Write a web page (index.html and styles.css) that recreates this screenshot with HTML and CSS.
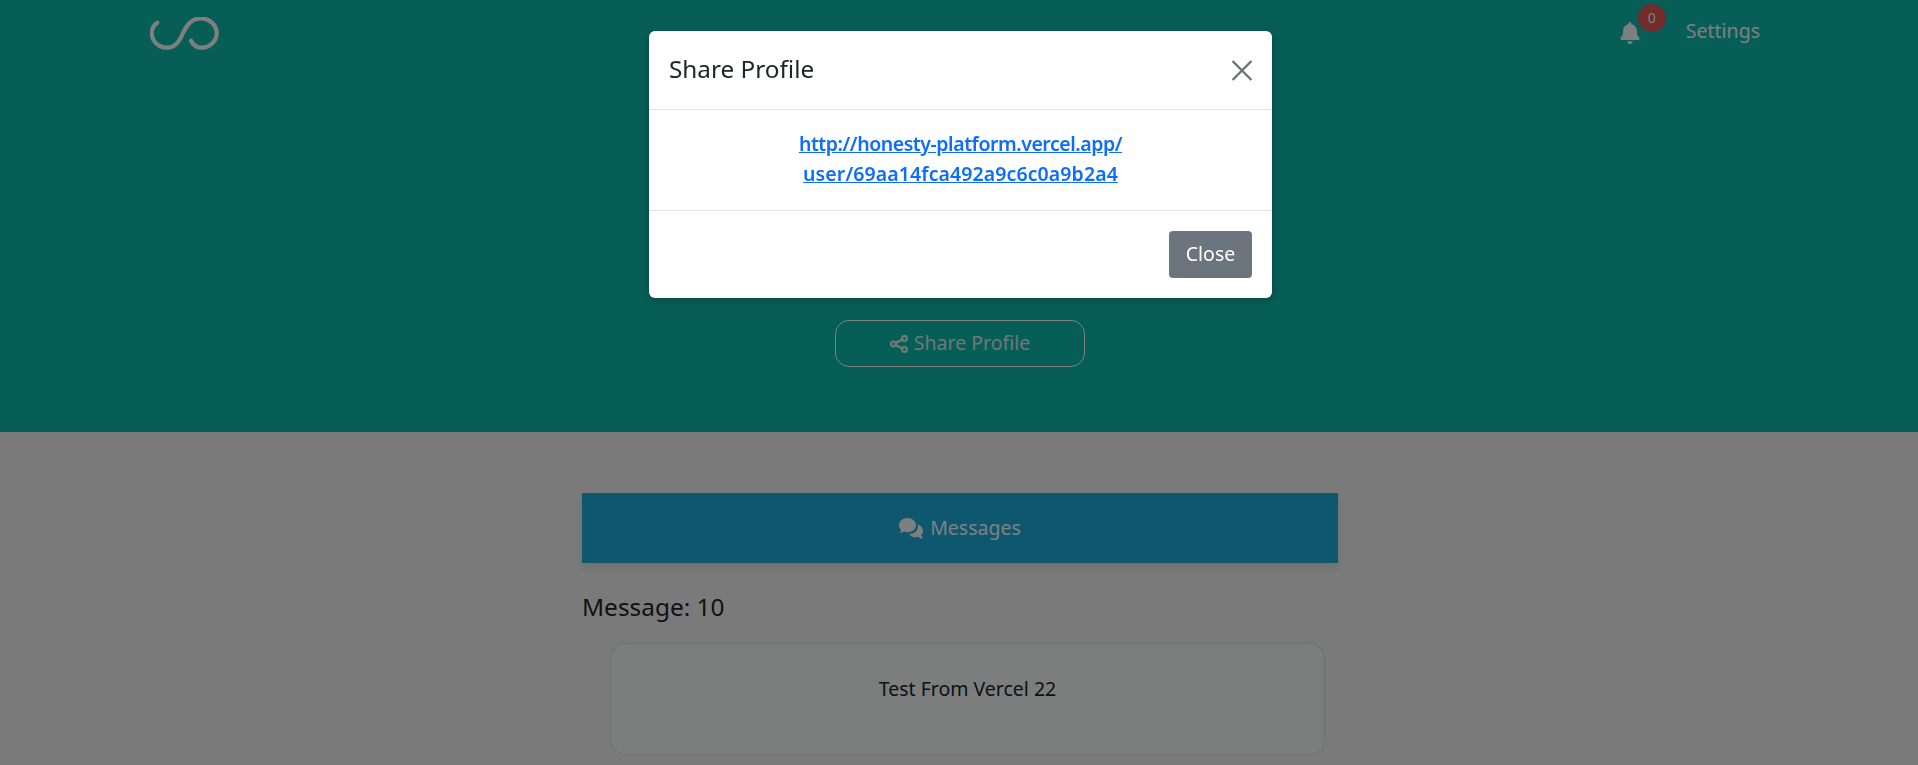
FILE: index.html
```html
<!DOCTYPE html>
<html lang="en">
<head>
<meta charset="utf-8">
<title>Share Profile</title>
<link rel="stylesheet" href="styles.css">
</head>
<body>
<div class="page">
  <header class="hero">
    <nav class="nav">
      <svg class="logo" viewBox="0 0 70 34" aria-hidden="true"><path d="M7.300 5.700C3.500 8.500 1.700 12 1.700 16c0 8 6.500 14.700 15 14.700 7.500 0 12-4.500 16.300-14.700C36.500 8 41.500 1.300 50.700 1.300c8.500 0 16 6.700 16 14.700 0 8.500-7 14.700-15 14.700-4.500 0-8-1.500-10.700-7"/></svg>
      <div class="nav-right">
        <span class="bell-wrap">
          <svg class="bell" viewBox="0 0 448 512" aria-hidden="true"><path d="M224 512c35.320 0 63.970-28.650 63.970-64H160.030c0 35.350 28.650 64 63.970 64zm215.390-149.710c-19.320-20.760-55.470-51.990-55.470-154.290 0-77.700-54.480-139.900-127.940-155.160V32c0-17.670-14.320-32-31.980-32s-31.980 14.330-31.980 32v20.840C118.560 68.100 64.080 130.300 64.080 208c0 102.300-36.150 133.530-55.470 154.290-6 6.450-8.660 14.160-8.610 21.710.11 16.400 12.980 32 32.100 32h383.800c19.120 0 32-15.600 32.100-32 .05-7.550-2.610-15.270-8.610-21.710z"/></svg>
          <span class="badge">0</span>
        </span>
        <a class="nav-link">Settings</a>
      </div>
    </nav>
    <button class="share-btn">
      <svg class="share-icon" viewBox="0 0 18 18" aria-hidden="true"><circle cx="14.500" cy="3.500" r="2.400"/><circle cx="3.500" cy="9" r="2.400"/><circle cx="14.500" cy="14.500" r="2.400"/><path d="M5.700 7.900 12.300 4.600M5.700 10.100l6.600 3.300"/></svg>
      <span>Share Profile</span>
    </button>
  </header>
  <main class="content">
    <div class="msg-bar">
      <svg class="msg-icon" viewBox="0 0 25 21" aria-hidden="true"><path d="M8.500 0C3.800 0 0 3.200 0 7.200c0 1.900.8 3.600 2.200 4.900C1.700 13.700.500 15 .500 15c2 0 3.500-.6 4.700-1.400 1 .4 2.100.6 3.300.6 4.700 0 8.500-3.200 8.500-7S13.200 0 8.500 0z"/><path d="M18.600 6.200c.3.700.4 1.400.4 2.200 0 4.400-3.800 7.500-8.800 7.500 1.100 2 3.300 3.300 6 3.300.9 0 1.800-.2 2.600-.5 1.100.9 2.800 1.800 5.200 1.800 0 0-1.200-1.300-1.900-3.200 1.200-1.200 1.900-2.700 1.900-4.300 0-3-2-5.600-5.400-6.800z"/></svg>
      <span>Messages</span>
    </div>
    <h2 class="count">Message: 10</h2>
    <article class="card"><p>Test From Vercel 22</p></article>
  </main>
</div>
<div class="backdrop"></div>
<div class="modal-wrap">
  <div class="modal">
    <div class="modal-head">
      <h5>Share Profile</h5>
      <svg class="close-x" viewBox="0 0 20 20" aria-hidden="true"><path d="M1 1l18 18M19 1 1 19"/></svg>
    </div>
    <div class="modal-body">
      <a class="share-link"><span class="link-first">http://honesty-platform.vercel.app/</span><br><span class="link-second">user/69aa14fca492a9c6c0a9b2a4</span></a>
    </div>
    <div class="modal-foot"><button class="close-btn">Close</button></div>
  </div>
</div>
</body>
</html>
```
FILE: styles.css
```css
* { box-sizing: border-box; }
html, body { margin: 0; height: 765px; overflow: hidden; }
body { background: #f4f5f7; color: #212529; font-family: "Noto Sans", "Lato", sans-serif; font-size: 19.500px; line-height: 1.5; }
.page { width: 1920px; }
.hero { height: 432px; background: #0fbcae; display: flex; flex-direction: column; align-items: center; }
.nav { width: 100%; height: 320px; display: flex; justify-content: space-between; align-items: flex-start; padding: 17px 160px 0 150px; }
.logo { width: 70px; height: 34px; fill: none; stroke: #fff; stroke-width: 4.200; stroke-linecap: round; }
.nav-right { display: flex; align-items: flex-start; }
.bell-wrap { position: relative; width: 20px; margin-right: 46px; padding-top: 5px; }
.bell { display: block; width: 20px; height: 22px; fill: #fff; }
.badge { position: absolute; left: 18px; top: -13px; width: 28px; height: 28px; border-radius: 50%; background: #e05a58; color: #fff; font-size: 14px; line-height: 28px; text-align: center; }
.nav-link { color: #fff; display: block; line-height: 28px; }
.share-btn { width: 250px; height: 47px; display: flex; align-items: center; justify-content: center; gap: 6px; background: transparent; border: 1px solid #fff; border-radius: 14px; color: #dff0ee; font: inherit; padding: 0 0 2px; }
.share-icon { width: 18px; height: 18px; margin-top: 2px; fill: none; stroke: #dff0ee; stroke-width: 2.400; }
.content { width: 756px; margin: 61px auto 0; }
.msg-bar { height: 70px; background: #1bb0de; color: #fff; display: flex; align-items: center; justify-content: center; gap: 6px; box-shadow: 0 4px 8px rgba(0,0,0,.1); }
.msg-icon { width: 25px; height: 21px; fill: #fff; }
.count { margin: 26px 0 0; font-size: 24.400px; font-weight: 400; line-height: 36px; }
.card { margin: 18px 13px 0 28px; height: 112px; background: #f9fafb; border: 1px solid #dee2e6; border-radius: 16px; text-align: center; padding-top: 30px; }
.card p { margin: 0; }
.backdrop { position: fixed; inset: 0; background: rgba(0,0,0,.5); }
.modal-wrap { position: fixed; left: 649px; top: 31px; width: 623px; }
.modal { background: #fff; border-radius: 6px; box-shadow: 0 2px 8px rgba(0,0,0,.25); }
.modal-head { height: 79px; display: flex; align-items: center; justify-content: space-between; padding: 0 19px 0 20px; border-bottom: 1px solid #dee2e6; }
.modal-head h5 { margin: 0 0 2px; font-size: 24.300px; font-weight: 400; line-height: 1.5; }
.close-x { width: 22px; height: 21px; fill: none; stroke: #6c7075; stroke-width: 2.200; }
.modal-body { height: 101px; padding-top: 19px; text-align: center; border-bottom: 1px solid #dee2e6; }
.share-link { color: #0d6efd; font-weight: 600; text-decoration: underline; line-height: 30px; display: block; }
.link-first { letter-spacing: -.45px; }
.link-second { letter-spacing: .1px; }
.modal-foot { height: 87px; padding: 20px 20px 0; display: flex; justify-content: flex-end; }
.close-btn { width: 83px; height: 47px; background: #6c757d; color: #fff; border: 0; border-radius: 4px; font: inherit; padding: 0 0 2px; }
```
